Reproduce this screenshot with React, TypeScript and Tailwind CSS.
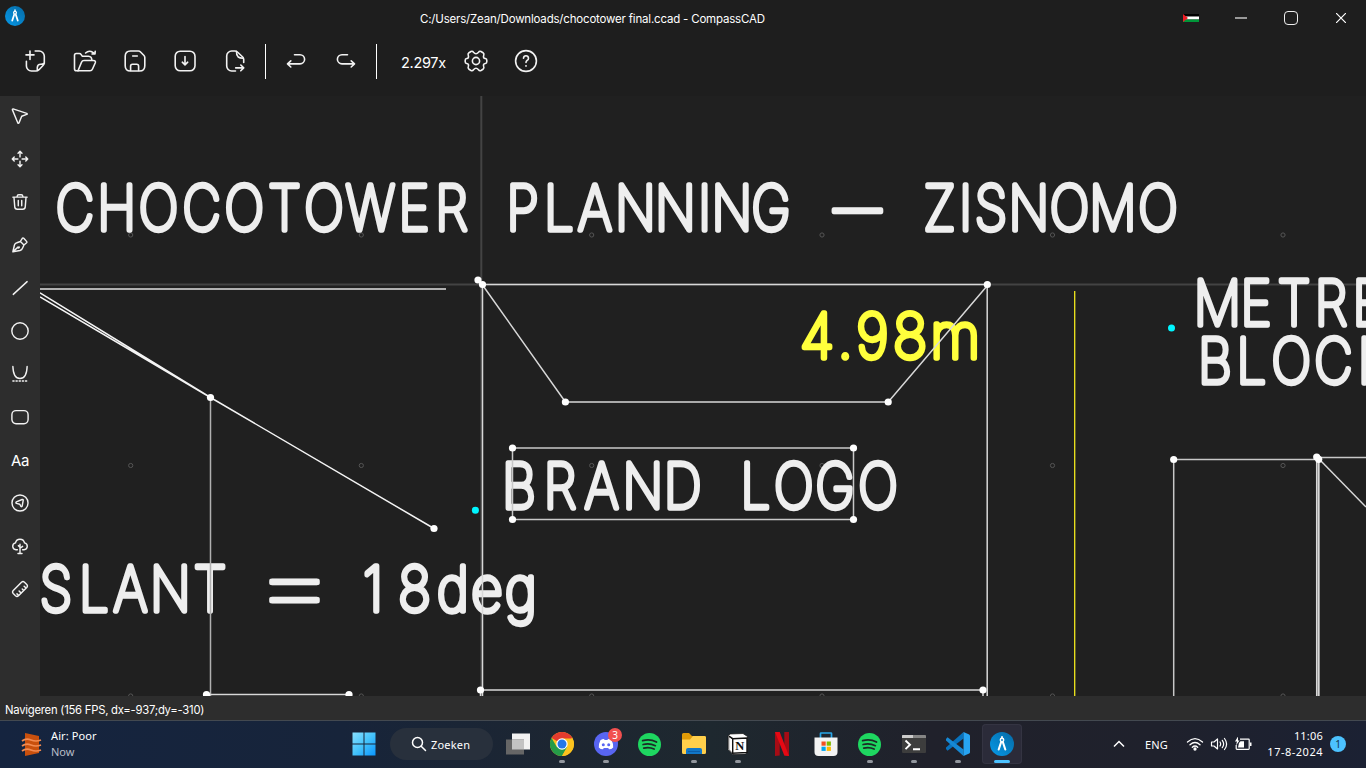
import React from "react";

type P = { children: React.ReactNode; size?: number; sw?: number };

function Icon({ children, size = 24, sw = 1.6 }: P) {
  return (
    <svg width={size} height={size} viewBox="0 0 24 24" fill="none" stroke="#f2f2f2" strokeWidth={sw} strokeLinecap="round" strokeLinejoin="round">
      {children}
    </svg>
  );
}

const fileIcons = [
  <>
    <path d="M7 2v8.5M3 5.9h8" />
    <path d="M12.2 2H16a5.2 5.2 0 0 1 5.3 5.200V14.300Q21 15.500 20 16.500L16 20.700Q14.600 22 13 22H8.400A5 5 0 0 1 3.400 17V12.300M14.300 21.800V18.500Q14.500 15.300 17.700 15.300 20 15.300 21.200 14" />
  </>,
  <>
    <path d="M5 21.800H3.400A1.900 1.900 0 0 1 1.500 20V6.200Q1.500 4.500 3.200 4.500H6.300Q7.500 4.500 8.200 5.600L9.200 7.200H15.500Q18.800 7.500 18.800 11" />
    <path d="M5 21.800 8.500 13.300Q9.200 11.500 11 11.500H20.300Q23.200 11.500 22.200 14L19.500 20Q18.800 21.800 17 21.800H5" />
    <path d="M12.600 4Q16 .7 20 3.500L22 4.800M22.200 2.400 22 5H19" />
  </>,
  <>
    <path d="M7.500 2H15.500Q16.600 2 17.300 2.700L21 6.500Q21.800 7.300 21.800 8.500V16.700Q21.800 22 16.500 22H7.500Q2.200 22 2.200 16.700V7.300Q2.200 2 7.500 2Z" />
    <path d="M9.700 7H14.300M7.600 21.500V17.200Q7.600 15.300 9.500 15.300H13.700Q15.600 15.300 15.600 17.200V21.500" />
  </>,
  <>
    <rect x="2.200" y="2.200" width="19.800" height="19.600" rx="5" />
    <path d="M12 7.500V15.500M9.300 13.200 12 15.800 14.700 13.200" />
  </>,
  <>
    <path d="M12.500 22H8.700A5 5 0 0 1 3.700 17V7A5 5 0 0 1 8.700 2H12Q13.400 2 14.400 3L19.700 8Q20.700 9 20.700 10.500V13.500" />
    <path d="M13.500 2.500Q13.300 6.300 15.200 8 17 9.400 20.300 9.300M12.700 18.900H20.600M17.800 16 20.700 18.900 17.800 21.800" />
  </>,
];

const undoIcon = <path d="M10.500 5.700H16A4.600 4.600 0 0 1 16 14.900H3.800M6.800 11.900 3.500 14.900 6.800 18" />;
const redoIcon = <path d="M13.500 5.700H8A4.600 4.600 0 0 0 8 14.900H20.200M17.200 11.900 20.500 14.900 17.200 18" />;

const toolIcons = [
  <path d="M2.800 1.200 21 7.200Q22.300 7.900 21 8.600L14.300 11 10.800 19.500Q10 21.300 9 19.700L1.900 2.500Q1.600 1 2.800 1.200Z" />,
  <path d="M12 9.200V2.500M9.400 4.300 12 1.700 14.600 4.300M12 14.800V21.500M9.400 19.700 12 22.300 14.600 19.700M9.200 12H2.500M4.300 9.400 1.700 12 4.300 14.600M14.800 12H21.500M19.700 9.400 22.300 12 19.700 14.600" />,
  <path d="M2.500 5.500H21.500M8.200 5.300V4.300Q8.400 2.400 10.300 2.400H13.700Q15.600 2.400 15.800 4.300V5.300M4 6 5 18.500Q5.200 21.700 8.400 21.700H15.600Q18.800 21.700 19 18.500L20 6M9.700 10V17M14.300 10V17" />,
  <path d="M2.500 21 4.600 12Q5.400 9.600 7.800 9L12.500 7.300 17.300 12 15.500 16Q14.500 18.700 12 19.300L2.500 21 9.300 14.800M12.500 7.300 15.300 2.800Q16.200 2.200 17 3L21 7.500Q21.700 8.300 20.800 9.100L17.300 12M9 15.200A1 1 0 1 0 11 14.500" />,
  <path d="M3 20.500 21.500 3.500" />,
  <circle cx="12" cy="12" r="10.900" />,
  <>
    <path d="M2.500 2Q3 18 12 18T21.500 2" />
    <path d="M2.500 21.300H22" strokeDasharray="1.600 2.600" />
  </>,
  <rect x="1.200" y="3.500" width="21.600" height="17.400" rx="5.500" />,
  null,
  <>
    <circle cx="12" cy="12" r="10.700" />
    <path d="M7.200 10.500 14.800 7.300Q16.600 6.800 16.300 8.600L14.900 16Q14.500 17.500 13.200 16.500L11.700 13.700 7.300 12.500Q5.800 11.500 7.200 10.500Z" />
  </>,
  <path d="M8.500 17H6.600A4.600 4.600 0 0 1 6 7.900 6.100 6.100 0 0 1 18 7.900 4.600 4.600 0 0 1 17.400 17H15.500M12 9.500V22M9.300 22H14.700M12 15 15.500 12.500M12 13.500 9.800 11.500" />,
  <path d="M3 14 14 3Q16 1.300 18 3L21 6Q22.800 8 21 10L10 21Q8 22.800 6 21L3 18Q1.200 16 3 14ZM10 20.500 8 18.500M13.500 17.500 10.800 14.800M17 14 15 12M20 10.800 17.500 8.300" />,
];

type GlyphProps = { text: string; xs: number[]; y: number; color?: string; stretch?: number; size?: number; weight?: number };

function Lettering({ text, xs, y, color = "#eeeeee", stretch = 0.86, size = 61.5, weight = 5.5 }: GlyphProps) {
  return (
    <text
      x={xs.map((v) => v / stretch).join(" ")}
      y={y}
      transform={`scale(${stretch} 1)`}
      textAnchor="middle"
      fill={color}
      stroke={color}
      strokeWidth={weight}
      strokeLinejoin="round"
      fontSize={size}
      className="font-['Inter'] font-thin"
    >
      {text}
    </text>
  );
}

const nodes = [
  [478, 280], [482.5, 284.5], [987.3, 284.5], [565.4, 402], [888.2, 402], [512.5, 448], [853.5, 448],
  [512.5, 519.5], [853.5, 519.5], [210.5, 397.5], [434, 528.5], [206.5, 694.5], [349, 694.5],
  [480.5, 690], [983, 690], [1173.7, 459.5], [1316.7, 457], [1318.7, 459.3],
];

function Drawing() {
  return (
    <svg viewBox="40 96 1326 600" width="1326" height="600" className="block bg-[#202020]">
      <g stroke="#434343" strokeWidth="2">
        <path d="M481.300 96V696M40 284.600H1366" />
      </g>
      <g fill="none" stroke="#555" strokeWidth="1">
        {[235, 465.5, 696].map((y) =>
          [130.7, 361.3, 591.7, 822, 1052.5, 1283].map((x) => <circle key={`${x}-${y}`} cx={x} cy={y} r="2.100" />)
        )}
      </g>
      <Lettering text="CHOCOTOWER" xs={[75, 116.8, 158.5, 201.7, 244.2, 284.5, 324, 370.2, 414, 451.5]} y={230.200} />
      <Lettering text="PLANNING" xs={[522.5, 559, 595, 635.5, 675.5, 704.5, 732, 771]} y={230.200} />
      <Lettering text="—" xs={[857.5]} y={230} stretch={0.77} />
      <Lettering text="ZISNOMO" xs={[939.5, 965.5, 991, 1029, 1069.5, 1113, 1158]} y={230.200} />
      <Lettering text="METRE" xs={[1217.3, 1256, 1294, 1331, 1368]} y={325.500} />
      <Lettering text="BLOCK" xs={[1215, 1251.500, 1291.2, 1333.3, 1373.5]} y={383.500} />
      <Lettering text="BRAND" xs={[519, 560, 601.6, 642.9, 682.6]} y={508} />
      <Lettering text="LOGO" xs={[755.5, 793.8, 835, 877.9]} y={508} />
      <Lettering text="SLANT" xs={[56, 94, 130.5, 170.5, 210]} y={611.500} />
      <Lettering text="=" xs={[294.5]} y={618} stretch={1.38} size={95} weight={4.5} />
      <Lettering text="18deg" xs={[373, 414.5, 453, 487, 521]} y={611.500} stretch={0.89} />
      <Lettering text="4.98m" xs={[817, 845.2, 872.5, 910.2, 955.2]} y={358} color="#ffff3c" stretch={0.93} />
      <g fill="none" stroke="#d8d8d8" strokeWidth="1.500">
        <path d="M40 289H446" stroke="#b0b0b0" strokeWidth="2" />
        <path d="M40 292.800 210.500 397.500M40 297 210.500 397.500 434 528.500" stroke="#f4f4f4" strokeWidth="1.500" />
        <path d="M210.500 397V696" stroke="#b0b0b0" />
        <path d="M206 694.500H349M482 284.500H987M480 690H983" />
        <path d="M482.500 284V696M987.200 284V696" />
        <path d="M480.500 690V696M983 690V696" />
        <path d="M482.500 285 565.400 402H888.200L987 286" strokeWidth="1.500" />
        <path d="M512.500 448H853.500V519.500H512.500Z" stroke="#c8c8c8" />
        <path d="M1173.700 696V459.500H1318M1317 457.500H1366" stroke="#c8c8c8" />
        <path d="M1316.800 457V696M1318.800 459V696" strokeWidth="1.700" />
        <path d="M1319 459 1366 507" strokeWidth="1.500" />
      </g>
      <path d="M1074.700 291V696" stroke="#f2e81e" strokeWidth="1.300" />
      {nodes.map(([x, y]) => <circle key={`${x}-${y}`} cx={x} cy={y} r="3.600" fill="#fff" />)}
      <circle cx="475.400" cy="510.200" r="3.500" fill="#00f6ff" />
      <circle cx="1171.500" cy="328" r="3.500" fill="#00f6ff" />
    </svg>
  );
}

function CompassLogo({ size }: { size: number }) {
  return (
    <svg width={size} height={size} viewBox="0 0 24 24">
      <defs>
        <linearGradient id="compass" x1="1" y1="0" x2="0" y2="1">
          <stop offset="0" stopColor="#056aa5" />
          <stop offset="1" stopColor="#0799e8" />
        </linearGradient>
      </defs>
      <circle cx="12" cy="12" r="12" fill="url(#compass)" />
      <g fill="none" stroke="#fff" strokeLinecap="round">
        <path d="M12 4.800V6" strokeWidth="1.800" />
        <circle cx="12" cy="8" r="1.700" strokeWidth="1.500" />
        <path d="M11 10.500 8.700 17.500M13 10.500 15.300 17.500" strokeWidth="2.100" />
      </g>
    </svg>
  );
}

function Spotify() {
  return (
    <svg className="mr-px" width="23" height="23" viewBox="0 0 24 24">
      <circle cx="12" cy="12" r="12" fill="#1ed760" />
      <path d="M4.800 8Q12.500 5.800 19.300 9.400M5.300 12Q12 10.200 18.100 13.200M6 15.800Q11.700 14.200 16.800 16.800" fill="none" stroke="#1c2a26" strokeWidth="1.800" strokeLinecap="round" />
    </svg>
  );
}

function TaskItem({ children, running, active }: { children: React.ReactNode; running?: boolean; active?: boolean }) {
  return (
    <div className={active ? "relative mt-[3px] flex h-10 w-10 shrink-0 items-center justify-center rounded bg-[#2b2b39] ring-1 ring-inset ring-[#343442]" : "relative mt-[3px] flex h-10 w-10 shrink-0 items-center justify-center"}>
      {children}
      {running && <span className="absolute bottom-px h-[3px] w-1.5 rounded-full bg-[#93979e]" />}
      {active && <span className="absolute bottom-px h-[3px] w-4 rounded-full bg-[#4cc2ff]" />}
    </div>
  );
}

function Taskbar() {
  return (
    <footer className="flex h-12 items-start border-t border-[#434950] bg-[linear-gradient(90deg,#15243f_0%,#17243a_25%,#1d2631_42%,#1e282f_52%,#20212b_68%,#1f212c_85%,#1b2133_100%)] font-['Noto_Sans'] text-[11px] text-white">
      <div className="flex h-[46px] w-[344px] items-center pl-[21px]">
        <svg width="21" height="25" viewBox="0 0 21 25">
          <path d="M4 1 18 4V21L4 24Z" fill="#c9500d" />
          <path d="M1 9Q5 6 10 8T20 8M1 14Q5 11 10 13T20 13M1 19Q5 16 10 18T20 18" fill="none" stroke="#f38b51" strokeWidth="1.700" />
        </svg>
        <div className="ml-[9px] leading-4">
          <div className="tracking-[0.1px]">Air: Poor</div>
          <div className="text-[#b8bdc7]">Now</div>
        </div>
      </div>
      <TaskItem>
        <svg width="24" height="24" viewBox="0 0 24 24">
          <defs>
            <linearGradient id="win" gradientUnits="userSpaceOnUse" x1="0" y1="0" x2="24" y2="24"><stop offset="0" stopColor="#8be2ff" /><stop offset="0.5" stopColor="#45c3fb" /><stop offset="1" stopColor="#0793ff" /></linearGradient>
          </defs>
          <path d="M.5.500h11v11H.5zM12.500.500h11v11h-11zM.5 12.500h11v11H.5zM12.500 12.500h11v11h-11z" fill="url(#win)" />
        </svg>
      </TaskItem>
      <div className="ml-[6px] mt-[7px] flex h-8 w-[103px] items-center rounded-full bg-[#28303c] pl-[21px]">
        <svg width="16" height="16" viewBox="0 0 16 16" fill="none" stroke="#fff" strokeWidth="1.500" strokeLinecap="round"><circle cx="6.500" cy="6.500" r="5" /><path d="m10.200 10.200 4.300 4.300" /></svg>
        <span className="ml-[4px] mt-0.5 tracking-[0.2px]">Zoeken</span>
      </div>
      <div className="ml-[5px] flex gap-1">
        <TaskItem>
          <svg width="24" height="24" viewBox="0 0 24 24">
            <path d="M6 1.500h18v16H6z" fill="#f2f2f2" /><path d="M0 7.500h18v15H0z" fill="#666" /><path d="M6 7.500h12v10H6z" fill="#c3c3c3" />
          </svg>
        </TaskItem>
        <TaskItem running>
          <svg width="24" height="24" viewBox="0 0 24 24">
            <circle cx="12" cy="12" r="12" fill="#fcc31e" />
            <path d="M12 12 1.600 6A12 12 0 0 1 22.400 6Z" fill="#e33b2e" />
            <path d="M1.600 6A12 12 0 0 0 12 24L17.200 15 12 12 6.800 15Z" fill="#259b48" />
            <path d="M12 6.500H22.600A12 12 0 0 1 12 24L17.200 15Z" fill="#fcc31e" />
            <circle cx="12" cy="12" r="5.700" fill="#fff" /><circle cx="12" cy="12" r="4.500" fill="#2476e8" />
          </svg>
        </TaskItem>
        <TaskItem running>
          <svg width="24" height="24" viewBox="0 0 24 24">
            <circle cx="12" cy="12" r="12" fill="#5865f2" />
            <path d="M8.200 7.300 10 6.900 10.600 8H13.400L14 6.900 15.800 7.300 17.600 8.300Q19.300 11.500 19.200 15.400L17.300 16.900 15 17.300 14.200 16H9.800L9 17.300 6.700 16.900 4.800 15.400Q4.700 11.500 6.400 8.300Z" fill="#fff" />
            <circle cx="9.300" cy="12.700" r="1.500" fill="#5865f2" /><circle cx="14.700" cy="12.700" r="1.500" fill="#5865f2" />
          </svg>
          <span className="absolute left-[22px] top-[4px] flex h-3.5 w-3.5 items-center justify-center rounded-full bg-[#f1504f] text-[10px]">3</span>
        </TaskItem>
        <TaskItem><Spotify /></TaskItem>
        <TaskItem running>
          <svg width="24" height="24" viewBox="0 0 24 24">
            <path d="M0 2.500Q0 1 1.500 1H7L10 4H22.500Q24 4 24 5.500V10H0Z" fill="#e09b08" />
            <path d="M0 7.500H8L11 4H22.500Q24 4 24 5.500V20.500Q24 22 22.500 22H1.500Q0 22 0 20.500Z" fill="#ffcf4b" />
            <path d="M4 22V18Q4 16 6 16H18Q20 16 20 18V22Z" fill="#1177c8" /><path d="M6 19H18V20H6z" fill="#0b5da8" />
          </svg>
        </TaskItem>
        <TaskItem running>
          <svg width="22" height="22" viewBox="0 0 22 22">
            <path d="M1 3 3 1 16 .500 20.500 3.500V19L18.500 21 6 21.500 1 16.500Z" fill="#fff" stroke="#111" strokeWidth=".700" />
            <path d="M1.800 3.300 5.500 6V20.300L1.800 16.300Z" fill="#fff" stroke="#111" strokeWidth=".600" />
            <path d="M2 3.200 5.700 5.700 20 5V19.400L5.700 20.300V5.700" fill="none" stroke="#111" strokeWidth="1.400" />
            <text x="12.700" y="17.300" textAnchor="middle" fill="#111" className="font-['Liberation_Serif'] text-[12.500px] font-bold">N</text>
          </svg>
        </TaskItem>
        <TaskItem>
          <svg width="14" height="24" viewBox="0 0 14 24"><path d="M0 0H4.700V23.500L0 24ZM9.300 0H14V24L9.300 23.500Z" fill="#a60c15" /><path d="M0 0H4.700L14 24 9.300 23.500Z" fill="#e50914" /></svg>
        </TaskItem>
        <TaskItem>
          <svg width="24" height="24" viewBox="0 0 24 24">
            <path d="M6.500 6V1.500Q6.500 1 7 1H17Q17.500 1 17.500 1.500V6" fill="none" stroke="#28a6e8" strokeWidth="1.700" />
            <path d="M.5 5.500H23.500V20Q23.500 24 19.500 24H4.500Q.5 24 .5 20Z" fill="#f3f3f3" />
            <path d="M7.500 9.500H11.700V13.700H7.500z" fill="#f25022" /><path d="M12.700 9.500H16.900V13.700H12.700z" fill="#7fba00" /><path d="M7.500 14.700H11.700V18.900H7.500z" fill="#00a4ef" /><path d="M12.700 14.700H16.900V18.900H12.700z" fill="#ffb900" />
          </svg>
        </TaskItem>
        <TaskItem running><Spotify /></TaskItem>
        <TaskItem running>
          <svg width="24" height="24" viewBox="0 0 24 24"><rect y="3" width="24" height="18" rx="1" fill="#3d3d3d" /><path d="M0 6V4Q0 3 1 3H23Q24 3 24 4V6Z" fill="#858585" /><path d="M0 6V4Q0 3 1 3H11V6Z" fill="#ccc" /><path d="m3.500 8.500 4.500 4.200-4.500 4.500M11 17.300H18" fill="none" stroke="#fff" strokeWidth="1.900" /></svg>
        </TaskItem>
        <TaskItem running>
          <svg width="24" height="24" viewBox="0 0 24 24"><path d="M17.500 6.500 1.500 18.800 0 17V15.500L17.500 0Z" fill="#0872bd" /><path d="M17.500 17.500 1.500 5.200 0 7V8.500L17.500 24Z" fill="#1688d4" /><path d="M17.500 0 23.200 2.500Q24 3 24 4V20Q24 21 23.200 21.500L17.500 24Z" fill="#27a4f2" /></svg>
        </TaskItem>
        <TaskItem active><CompassLogo size={24} /></TaskItem>
      </div>
      <div className="flex h-[46px] flex-1 items-center justify-end pr-[20px]">
        <svg width="12" height="8" viewBox="0 0 12 8" fill="none" stroke="#fff" strokeWidth="1.500"><path d="m1 6.500 5-5 5 5" /></svg>
        <span className="ml-5 mt-0.5 w-6 text-[11px] tracking-[0.1px]">ENG</span>
        <svg className="ml-[17px]" width="18" height="14" viewBox="0 0 18 14" fill="none" stroke="#fff" strokeWidth="1.300" strokeLinecap="round">
          <path d="M1.500 5Q9-1.700 16.500 5M4 7.700Q9 3.200 14 7.700M6.300 10.200Q9 7.800 11.700 10.200" /><circle cx="9" cy="12" r="1" fill="#fff" />
        </svg>
        <svg className="ml-[6px]" width="18" height="14" viewBox="0 0 18 14" fill="none" stroke="#fff" strokeWidth="1.200" strokeLinecap="round" strokeLinejoin="round">
          <path d="M1.500 5H4L7.500 2V12L4 9H1.500ZM10 5Q11.300 7 10 9M12.300 3.300Q15 7 12.300 10.700M14.500 1.500Q18.700 7 14.500 12.500" />
        </svg>
        <svg className="ml-[6px]" width="18" height="14" viewBox="0 0 18 14">
          <path d="M6 2.200H14.500Q15.200 2.200 15.200 3V11.500Q15.200 12.300 14.500 12.300H3Q2.200 12.300 2.200 11.500V8" fill="none" stroke="#fff" strokeWidth="1.200" /><path d="M5 6 6.500 4.200H10V10.500H4Z" fill="#fff" /><path d="M16 5.500H17.500V9H16Z" fill="#fff" /><path d="M4-.500 1 4.500H3L2 8.500 5.500 3.500H4Z" fill="#fff" />
        </svg>
        <div className="ml-[11px] w-[60px] text-right leading-4"><div className="tracking-[0.2px]">11:06</div><div className="tracking-[0.5px]">17-8-2024</div></div>
        <span className="ml-[7px] flex h-4 w-4 items-center justify-center rounded-full bg-[#4cc2ff] text-[10px] text-[#12354a]">1</span>
      </div>
    </footer>
  );
}

export default function App() {
  return (
    <div className="flex h-[768px] w-[1366px] flex-col overflow-hidden bg-[#1e1e1e] text-white">
      <header className="flex h-[38px] shrink-0 items-start">
        <div className="w-[420px] pl-[5px] pt-[6px]"><CompassLogo size={20} /></div>
        <h1 className="w-[345px] whitespace-nowrap pt-[10px] font-['Inter'] text-[11.500px] font-normal leading-[18px] tracking-[-0.19px]">C:/Users/Zean/Downloads/chocotower final.ccad - CompassCAD</h1>
        <div className="flex flex-1 justify-end">
          <div className="flex h-9 w-[50px] items-center justify-center">
            <svg width="16" height="8" viewBox="0 0 16 8"><path d="M0 0H16V2.500H0z" fill="#000" /><path d="M0 2.500H16V5.500H0z" fill="#fff" /><path d="M0 5.500H16V8H0z" fill="#009639" /><path d="M0 0 5 4 0 8Z" fill="#ed1c24" /></svg>
          </div>
          <div className="flex h-9 w-[50px] items-center justify-center"><span className="h-0.5 w-3 bg-[#999]" /></div>
          <div className="flex h-9 w-[50px] items-center justify-center"><span className="h-3.5 w-3.5 rounded border border-[#eee]" /></div>
          <div className="flex h-9 w-[50px] items-center justify-center"><svg width="10" height="10" viewBox="0 0 10 10" stroke="#fff" strokeWidth="1.200"><path d="M0 0 10 10M10 0 0 10" /></svg></div>
        </div>
      </header>
      <nav className="flex h-[58px] shrink-0 items-start pl-[10px]">
        {fileIcons.map((g, i) => <div key={i} className="flex h-[46px] w-[50px] items-center justify-center"><Icon>{g}</Icon></div>)}
        <div className="ml-[5px] mt-[6px] h-[35px] w-px bg-white" />
        <div className="ml-[5px] flex h-[46px] w-[50px] items-center justify-center"><Icon>{undoIcon}</Icon></div>
        <div className="flex h-[46px] w-[50px] items-center justify-center"><Icon>{redoIcon}</Icon></div>
        <div className="ml-[5px] mt-[6px] h-[35px] w-px bg-white" />
        <div className="ml-[24px] w-[50px] pt-[15px] font-['Inter'] text-[14.500px] leading-5 tracking-[-0.3px]">2.297x</div>
        <div className="flex h-[46px] w-[50px] items-center justify-center">
          <Icon>
            <circle cx="12" cy="12" r="3.600" />
            <path d="M9.500 3.200Q8.500 1.800 7 2.500L5 3.700Q3.500 4.800 4.300 6.500 5.200 9.200 2.700 9.500 1.200 9.700 1.200 11.200V12.800Q1.200 14.300 2.700 14.500 5.200 14.800 4.300 17.500 3.500 19.200 5 20.300L7 21.500Q8.500 22.200 9.500 20.800 12 17.800 14.500 20.800 15.500 22.200 17 21.500L19 20.300Q20.500 19.200 19.700 17.500 18.800 14.800 21.300 14.500 22.800 14.300 22.800 12.800V11.200Q22.800 9.700 21.300 9.500 18.800 9.200 19.700 6.500 20.500 4.800 19 3.700L17 2.500Q15.500 1.800 14.500 3.200 12 6.200 9.500 3.200Z" />
          </Icon>
        </div>
        <div className="flex h-[46px] w-[50px] items-center justify-center">
          <Icon><circle cx="12" cy="12" r="10.400" /><path d="M9.500 9.300Q9.700 6.800 12 6.800T14.500 9.200Q14.500 10.600 13 11.500 12 12.200 12 13.500" /><path d="M12 16.800v.1" strokeWidth="1.800" /></Icon>
        </div>
      </nav>
      <main className="flex h-[600px] shrink-0">
        <aside className="flex w-10 flex-col bg-[#2d2d2d]">
          {toolIcons.map((g, i) => (
            <div key={i} className="flex h-[43px] shrink-0 items-center justify-center first:h-[41px]">
              {g === null ? <span className="pt-0.5 font-['Inter'] text-[15px] leading-5 tracking-[-0.3px]">Aa</span> : <Icon size={18} sw={1.9}>{g}</Icon>}
            </div>
          ))}
        </aside>
        <Drawing />
      </main>
      <div className="flex h-6 shrink-0 items-center bg-[#2d2d2d] pl-[5px] pt-[5px] font-['Inter'] text-[11.300px] tracking-[-0.25px]">Navigeren (156 FPS, dx=-937;dy=-310)</div>
      <Taskbar />
    </div>
  );
}
